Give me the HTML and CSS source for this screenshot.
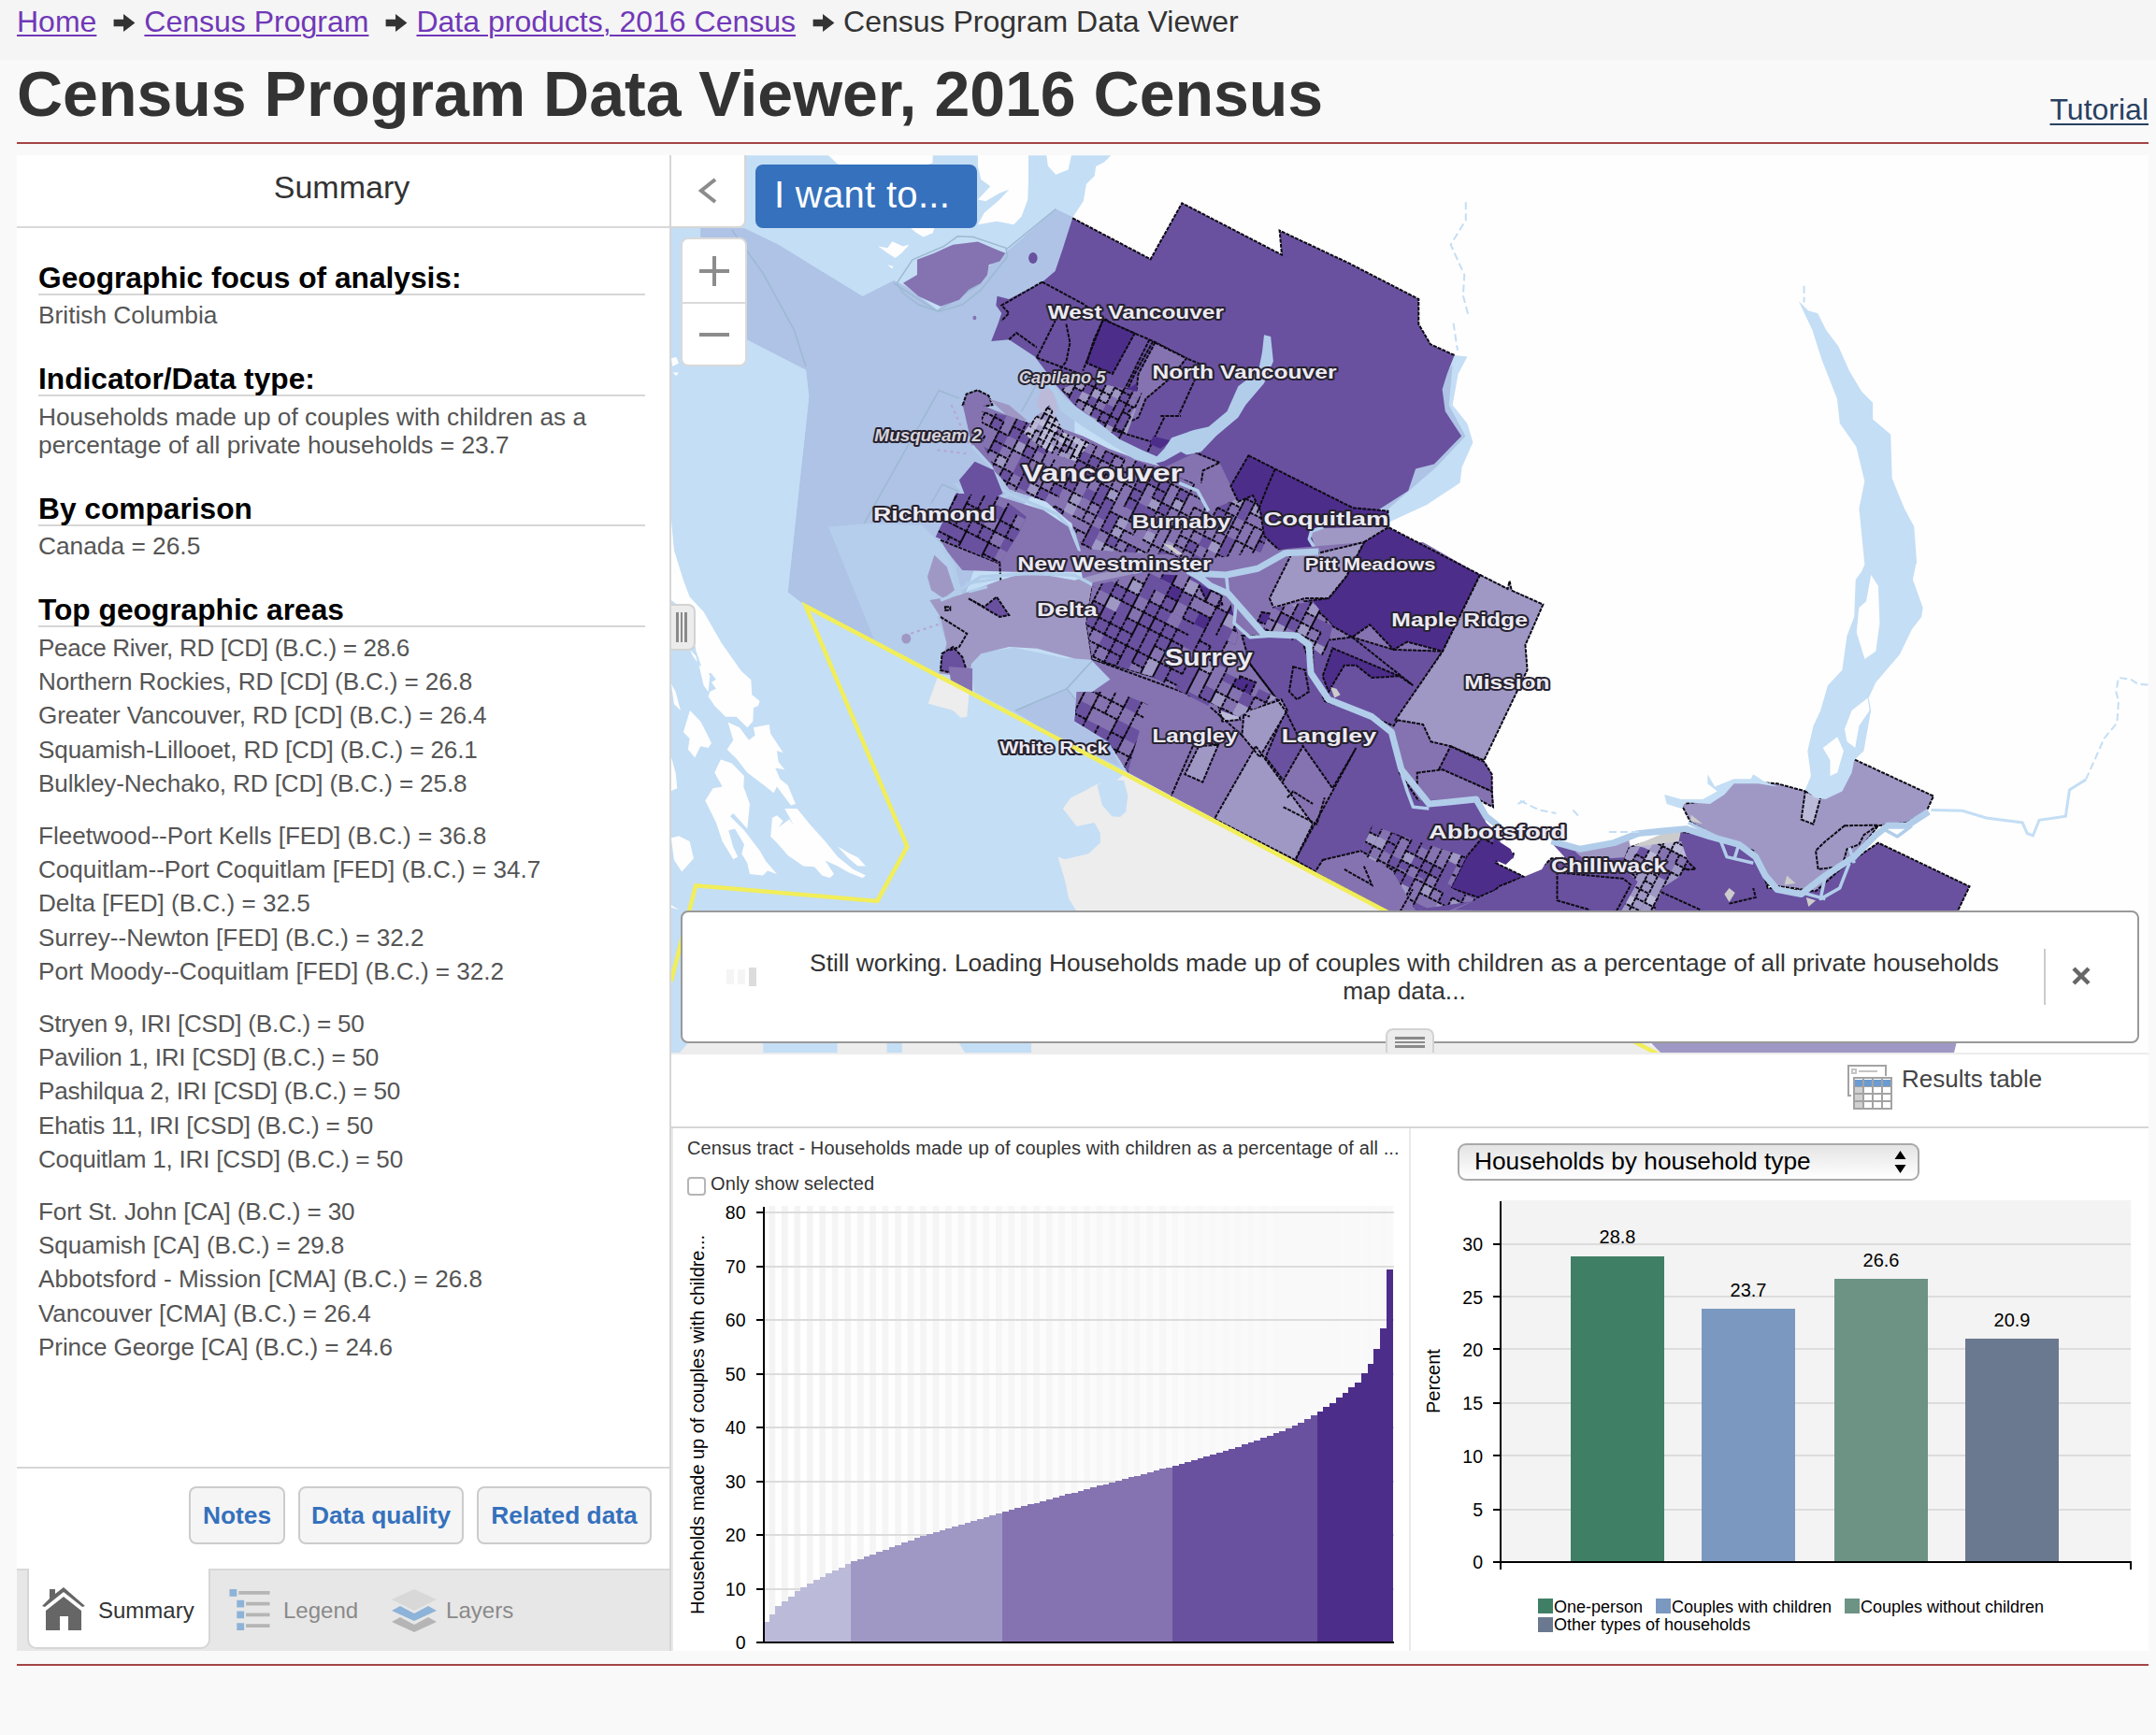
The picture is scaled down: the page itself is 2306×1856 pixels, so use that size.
FILE: index.html
```html
<!DOCTYPE html>
<html lang="en">
<head>
    <meta charset="UTF-8">
    <meta name="viewport" content="width=device-width, initial-scale=1.0">
    <title>Census Program Data Viewer, 2016 Census</title>
    <link rel="stylesheet" href="styles.css">
</head>
<body>
    <nav class="breadcrumb">
        <a href="#">Home</a>
        <svg class="arrow" viewBox="0 0 24 20"><path d="M0 6h11V0l13 10-13 10v-6H0z"/></svg>
        <a href="#">Census Program</a>
        <svg class="arrow" viewBox="0 0 24 20"><path d="M0 6h11V0l13 10-13 10v-6H0z"/></svg>
        <a href="#">Data products, 2016 Census</a>
        <svg class="arrow" viewBox="0 0 24 20"><path d="M0 6h11V0l13 10-13 10v-6H0z"/></svg>
        <span>Census Program Data Viewer</span>
    </nav>
    <header class="page-header">
        <h1>Census Program Data Viewer, 2016 Census</h1>
        <a href="#">Tutorial</a>
    </header>
    <main class="viewer">
        <section class="sidebar">
            <h2>Summary</h2>
            <div class="summary">
                <h3>Geographic focus of analysis:</h3>
                <p>British Columbia</p>
                <h3>Indicator/Data type:</h3>
                <p>Households made up of couples with children as a percentage of all private households = 23.7</p>
                <h3>By comparison</h3>
                <p>Canada = 26.5</p>
                <h3>Top geographic areas</h3>
                <ul class="divisions">
                    <li>Peace River, RD [CD] (B.C.) = 28.6</li>
                    <li>Northern Rockies, RD [CD] (B.C.) = 26.8</li>
                    <li>Greater Vancouver, RD [CD] (B.C.) = 26.4</li>
                    <li>Squamish-Lillooet, RD [CD] (B.C.) = 26.1</li>
                    <li>Bulkley-Nechako, RD [CD] (B.C.) = 25.8</li>
                </ul>
                <ul>
                    <li>Fleetwood--Port Kells [FED] (B.C.) = 36.8</li>
                    <li>Coquitlam--Port Coquitlam [FED] (B.C.) = 34.7</li>
                    <li>Delta [FED] (B.C.) = 32.5</li>
                    <li>Surrey--Newton [FED] (B.C.) = 32.2</li>
                    <li>Port Moody--Coquitlam [FED] (B.C.) = 32.2</li>
                </ul>
                <ul class="subdivisions">
                    <li>Stryen 9, IRI [CSD] (B.C.) = 50</li>
                    <li>Pavilion 1, IRI [CSD] (B.C.) = 50</li>
                    <li>Pashilqua 2, IRI [CSD] (B.C.) = 50</li>
                    <li>Ehatis 11, IRI [CSD] (B.C.) = 50</li>
                    <li>Coquitlam 1, IRI [CSD] (B.C.) = 50</li>
                </ul>
                <ul class="metro">
                    <li>Fort St. John [CA] (B.C.) = 30</li>
                    <li>Squamish [CA] (B.C.) = 29.8</li>
                    <li>Abbotsford - Mission [CMA] (B.C.) = 26.8</li>
                    <li>Vancouver [CMA] (B.C.) = 26.4</li>
                    <li>Prince George [CA] (B.C.) = 24.6</li>
                </ul>
            </div>
            <div class="actions">
                <button class="notes">Notes</button>
                <button class="quality">Data quality</button>
                <button class="related">Related data</button>
            </div>
            <div class="tabs">
                <div class="tab active">
                    <svg class="icon-home" viewBox="0 0 46 46">
                        <path d="M4 46V25L23 10l19 15v21H28V31h-9v15z"/>
                        <path d="M0 20 8 12V2h6v5l9-7 23 20-3 1L23 5 3 21z"/>
                    </svg>
                    <span>Summary</span>
                </div>
                <div class="tab">
                    <svg class="icon-legend" viewBox="0 0 44 46">
                        <path class="blue" d="M0 0h8v8H0zM8 12h8v8H8zM8 24h8v8H8zM8 37h8v8H8z"/>
                        <path class="grey" d="M10 2h34v4H10zM18 14h26v4H18zM18 26h26v4H18zM18 38h26v4H18z"/>
                    </svg>
                    <span>Legend</span>
                </div>
                <div class="tab">
                    <svg class="icon-layers" viewBox="0 0 48 46">
                        <path class="pale" d="M24 0 48 11 24 23 0 11z"/>
                        <path class="blue" d="M0 23 9 18l15 8 15-8 9 5-24 11z"/>
                        <path class="grey" d="M0 35 9 30l15 8 15-8 9 5-24 11z"/>
                    </svg>
                    <span>Layers</span>
                </div>
            </div>
        </section>

        <section class="content">
            <div class="map">
                <svg class="map-canvas" viewBox="488.2 112.9 1074.3 652.8" preserveAspectRatio="none">
                    <defs>
                        <clipPath id="clip-vancouver">
                            <polygon transform="matrix(.26886 0 0 .22665 680 136)" points="125,720 200,735 260,760 330,780 400,810 470,850 560,885 620,915 700,950 740,1040 860,980 900,1120 860,1230 740,1240 640,1180 480,1170 400,1160 370,1080 300,1010 200,970 160,900 130,830"/>
                        </clipPath>
                        <clipPath id="clip-downtown">
                            <polygon transform="matrix(.26886 0 0 .22665 680 136)" points="270,740 310,700 350,790 420,820 380,880 300,850 240,790"/>
                        </clipPath>
                        <clipPath id="clip-north">
                            <polygon transform="matrix(.26886 0 0 .22665 680 136)" points="340,650 400,620 560,660 520,790 500,815 440,755 380,700"/>
                        </clipPath>
                        <clipPath id="clip-richmond">
                            <polygon transform="matrix(.22665 0 0 .24283 486.8 108.8)" points="920,1030 1060,1040 1145,1100 1120,1150 1060,1240 855,1160"/>
                        </clipPath>
                        <clipPath id="clip-surrey">
                            <polygon transform="matrix(.2862 0 0 .22665 680 394.4)" points="400,140 540,100 660,110 750,190 770,300 740,420 870,500 770,560 700,530 550,430 400,375 385,260"/>
                        </clipPath>
                        <clipPath id="clip-whiterock">
                            <polygon transform="matrix(.2862 0 0 .22665 680 394.4)" points="355,575 360,480 460,480 540,520 500,690 490,740 440,640"/>
                        </clipPath>
                        <clipPath id="clip-ridge">
                            <polygon transform="matrix(.2862 0 0 .22665 680 394.4)" points="860,210 960,190 1010,270 990,370 950,330 830,290"/>
                        </clipPath>
                        <clipPath id="clip-abbotsford">
                            <polygon transform="matrix(.2862 0 0 .22665 680 394.4)" points="1110,910 1250,970 1350,1010 1310,1110 1380,1150 1220,1180 1160,1050 1080,1000"/>
                        </clipPath>
                        <clipPath id="clip-chilliwack">
                            <polygon transform="matrix(.34952 0 0 .22665 1019.9 408)" points="470,920 580,900 600,990 540,1050 525,1125 455,1125 490,1030 455,980"/>
                        </clipPath>
                    </defs>

                    <!-- strait, sound and inlets -->
                    <polygon class="water" points="488,113 808,113 803,118 797,121 796,128 790,134 788,146 779,160 760,205 870,320 870,400 830,565 1010,662 1210,766 488,766"/>
                    <g class="land" transform="matrix(.22665 0 0 .24283 486.8 108.8)">
                        <path d="M510 17 H845 V40 L780 60 H560 L530 35Z"/>
                        <path d="M990 17 H1152 V95 L1150 150 1130 200 1105 225 1050 215 990 225 1010 190 1060 150 1090 120 1060 130 1015 155 990 150 1030 110 1000 90 990 50Z"/>
                        <path d="M1210 17 H1290 L1280 60 1240 75 1215 50Z"/>
                        <path d="M670 290 L700 295 715 275 750 290 770 285 745 310 725 325 700 310Z M700 345 L718 350 715 357Z M775 235 H850 L845 250 815 262 790 248Z"/>
                        <path d="M6 1110 L15 1200 45 1290 65 1340 110 1385 165 1475 235 1568 H110 L85 1500 75 1400 6 1350Z"/>
                        <path d="M6 625 L22 622 30 640 10 650Z M10 668 H30 L22 678Z"/>
                    </g>
                    <g class="land" transform="matrix(.22665 0 0 .22665 486.8 435.2)">
                        <path d="M75 20 L100 35 165 140 170 165 215 220 262 262 265 310 290 330 285 345 270 352 268 395 250 415 215 380 180 380 145 345 125 315 130 300 150 290 135 270 150 260 120 225 105 190 80 150 85 60Z"/>
                        <path d="M95 215 L120 225 130 250 125 300 110 280Z M66 165 L85 185 90 205 75 185Z M6 275 L20 300 36 360 15 340Z"/>
                        <path d="M66 360 L100 395 118 430 135 465 125 480 100 475 82 512 60 485 65 450 45 430Z M6 510 L20 560 25 610 6 618Z"/>
                        <path d="M188 398 L225 415 255 455 275 440 270 415 320 405 325 435 365 495 345 490 350 525 370 550 340 545 355 580 380 600 405 660 390 665 345 605 335 625 290 590 250 560 215 515 185 485 205 455Z"/>
                        <path d="M165 518 L200 530 240 570 238 605 258 660 250 740 205 690 195 700 240 745 290 810 310 845 345 885 315 875 300 890 258 885 250 850 232 820 240 790 210 740 190 745 205 800 220 830 205 838 170 780 150 720 115 650 140 610 170 605 145 560Z"/>
                        <path d="M370 675 L410 675 450 725 500 780 540 830 590 870 630 890 620 898 575 880 540 860 500 842 528 885 515 898 490 890 465 862 430 860 380 825 345 785 325 765 330 705 345 697 365 715 350 735 385 710 400 730Z"/>
                        <path d="M540 797 L580 820 605 832 630 860 605 860 575 835Z M30 763 L65 780 78 835 40 878 15 840 6 770Z M6 985 L30 1000 6 992Z"/>
                    </g>
                    <g class="usa" transform="matrix(.22665 0 0 .22665 486.8 435.2)">
                        <path d="M860 255 L962 300 955 380 935 383 910 360 830 338Z"/>
                    </g>
                    <g transform="matrix(.2862 0 0 .22665 680 394.4)">
                        <path class="usa" d="M488 738 L1150 1185 1860 1640 H340 L360 1185 340 1145 330 1085 312 1010 330 1018 390 1000 420 965 420 935 405 900 360 912 325 855 345 820 370 805 410 778 460 765Z"/>
                        <path class="water" d="M412 780 L450 762 480 765 490 815 485 865 470 882 450 880 425 845Z"/>
                    </g>
                    <path class="usa" d="M501 758 H555 V766 H494Z M609 758 H645 V766 H609Z M656 758 H697 L702 766 H656Z M750 758 H1200 V766 H750Z"/>

                    <!-- water covered by coastal tracts -->
                    <g class="marine" transform="matrix(.22665 0 0 .24283 486.8 108.8)">
                        <path d="M100 235 H240 L350 285 620 440 720 392 760 410 860 480 1090 300 1240 178 1300 205 1300 400 1300 900 1000 1200 860 1568 840 1568 660 1480 435 1365 380 1325 448 740 438 660 100 500Z"/>
                        <path class="water" d="M80 500 L250 570 438 660 448 740 380 1325 100 1325Z"/>
                        <path class="marine-light" d="M510 1130 L635 1120 810 1125 870 1180 920 1260 940 1330 860 1400 890 1480 875 1568 850 1568 660 1475Z"/>
                        <path class="hair" d="M200 240 L300 370 400 540 438 650 M625 1120 L865 722 930 745 M720 400 L860 485 1000 400 M840 1060 L875 1003 930 1025 M1240 178 L1080 300 M1130 785 L1180 700"/>
                        <path class="dots" d="M775 1450 L870 1420 M905 765 L960 880 M860 900 L960 912"/>
                        <circle class="c2" cx="760" cy="1465" r="15"/>
                    </g>
                    <g transform="matrix(.2862 0 0 .22665 680 394.4)">
                        <path class="marine-light" d="M100 480 L90 400 115 355 200 338 330 372 400 375 445 440 400 485 360 480 360 580 440 640 490 740Z"/>
                        <path class="marine" d="M200 540 L335 470 360 510 355 580 440 640 470 720 300 625Z"/>
                        <path class="hair" d="M205 540 L335 470 400 380 M335 470 L360 510"/>
                    </g>

                    <!-- North Shore and Tri-Cities -->
                    <g transform="matrix(.26886 0 0 .22665 680 136)">
                        <path class="water" d="M1405 540 L1440 545 1415 600 1400 700 1440 760 1455 820 1425 900 1420 950 1330 1020 1230 1075 1150 1050 1200 800 1340 600Z"/>
                        <path class="marine" d="M1400 570 L1390 700 1435 800 1355 900 1220 1040 1150 1040 1250 800Z"/>
                        <path class="c4" d="M372 100 L583 232 668 52 938 218 932 140 1120 245 1308 360 1308 440 1340 505 1405 540 1385 600 1372 650 1380 720 1424 800 1350 890 1300 905 1280 975 1195 1040 1130 1040 900 1120 700 980 590 880 500 820 400 730 330 640 270 545 200 490 152 495 170 440 180 405 165 380 168 350 200 360 290 305 325 270 345 200Z"/>
                        <path class="edge" d="M372 100 L583 232 668 52 938 218 932 140 1120 245 1308 360 1308 440 1340 505 1405 540 M290 305 L400 375 480 440 590 495 680 550 720 570 M290 305 L180 380 200 405 180 430 M200 490 L220 468 275 515"/>
                        <path class="c5 edge" d="M455 425 L540 470 480 600 410 565 430 490Z"/>
                        <path class="c3 edge" d="M595 500 L680 550 640 610 570 680 550 740 480 780 540 700 550 600Z"/>
                        <path class="edge" d="M275 548 L325 430 M355 440 L365 500 355 560 335 590 M275 548 L460 630 M455 425 L400 590 M580 490 L500 680 M590 495 L540 600 505 690 M710 600 L660 730 M620 740 L575 850 M610 735 H665 M480 780 L620 830"/>
                        <path class="c5" d="M520 650 L545 630 548 675Z M590 800 L640 815 610 840 580 825Z"/>
                        <ellipse class="c4" cx="265" cy="228" rx="12" ry="18"/>
                        <ellipse class="c3" cx="107" cy="420" rx="5" ry="7"/>

                        <path class="c3 edge" d="M75 700 L85 665 115 652 145 670 155 700 110 710Z"/>
                        <path class="c2" d="M145 680 L200 700 250 750 200 740Z"/>
                        <path class="c3" d="M75 700 L115 695 200 735 250 760 300 740 330 770 400 800 470 840 560 880 620 900 700 855 770 885 800 960 860 990 900 1100 1050 1260 400 1260 370 1080 300 1010 200 960 150 900 100 830Z"/>
                        <path class="c1" d="M275 700 L285 655 305 645 325 665 330 720 300 740Z"/>
                    </g>
                    <g class="tracts" clip-path="url(#clip-vancouver)" data-box="690 285 235 140" data-cell="7.5" data-mix="3,3,4,4,3,4,3,2,3,4"></g>
                    <g class="tracts" clip-path="url(#clip-downtown)" data-box="735 290 65 50" data-cell="4.5" data-mix="1,1,2,1"></g>
                    <g class="tracts" clip-path="url(#clip-north)" data-box="760 270 95 65" data-cell="6.5" data-mix="4,4,3,2"></g>
                    <g transform="matrix(.26886 0 0 .22665 680 136)">
                        <path class="c5 edge" d="M848 862 L920 905 1130 1030 1225 1040 1225 1090 1180 1110 1140 1180 1030 1170 930 1165 890 1120 880 1040 860 990 820 1010 800 960Z"/>
                        <path class="c2" d="M1015 1110 L1040 1095 1225 1090 1140 1180 1100 1260 930 1260 960 1180 1030 1165Z"/>
                        <path class="river" d="M1050 1092 L1018 1105 1012 1130 1030 1165"/>
                        <path class="edge" d="M920 905 L900 960 870 1050 M700 850 L770 885 725 910 720 950"/>
                        <path class="inlet" d="M890 475 L908 480 915 560 890 630 840 700 820 740 760 800 720 850 680 860 665 850 620 880 590 890 540 875 480 830 400 770 340 720 320 660 280 600 300 600 350 680 430 745 500 810 560 845 600 865 620 840 640 805 700 780 740 770 790 720 820 640 875 590 885 530Z"/>
                        <path class="river" d="M660 950 L710 975 740 1040"/>
                        <path class="river-line" d="M100 830 L150 895 180 970 210 990"/>
                        <path class="river" d="M55 950 L100 1010 150 1025 200 985 250 1010 330 1050 375 1110 390 1170"/>
                    </g>

                    <!-- Bowen Island, Richmond and Delta -->
                    <g transform="matrix(.22665 0 0 .24283 486.8 108.8)">
                        <path class="hair" d="M730 400 L780 330 880 290 925 260 975 262 1080 295 1085 320 1000 420 940 465 865 485 800 465 750 430Z"/>
                        <path class="c3" d="M750 400 L795 375 795 330 850 310 910 285 990 276 1050 300 1078 310 1060 335 1025 345 1020 375 1000 400 960 420 930 450 870 470 800 440Z"/>
                        <path class="c3" d="M1060 1040 L1200 1080 1280 1130 1310 1200 1370 1240 1300 1265 1100 1265 940 1260 870 1180Z"/>
                        <path class="c4" d="M930 990 L980 935 1040 960 1070 1030 1010 1065 950 1040Z M920 1030 L1060 1040 1145 1100 1120 1150 1060 1240 855 1160Z"/>
                        <path class="edge" d="M870 1170 L1060 1240 1065 1330"/>
                        <path class="c2" d="M850 1215 L890 1250 915 1320 880 1345 840 1320 828 1280Z"/>
                        <path class="c2" d="M835 1350 L930 1335 1060 1290 1150 1265 1300 1290 1380 1270 1560 1240 1400 1420 1400 1532 1300 1525 1180 1495 1090 1490 1000 1510 970 1540 960 1580 865 1570 890 1480 870 1400Z"/>
                        <path class="c4 edge" d="M960 1345 L1010 1370 1050 1340 1090 1395 1060 1400Z M875 1510 L910 1490 940 1520 960 1580 870 1560Z"/>
                        <path class="edge" d="M870 1400 L955 1450 930 1490 900 1500"/>
                        <path class="edge" d="M885 1370 h16 v10 h-16z"/>
                        <path class="river" d="M870 1180 L915 1250 925 1330 870 1350"/>
                        <path class="river" d="M930 1320 L1000 1280 1150 1270 1300 1275 1370 1310 1470 1290 1530 1250"/>
                        <path class="river-line" d="M950 1300 L1060 1285 M960 1325 L1020 1310"/>
                    </g>
                    <g class="tracts" clip-path="url(#clip-richmond)" data-box="675 350 80 65" data-cell="9" data-mix="4,4,4,3"></g>

                    <!-- Surrey, Langley, Maple Ridge, Mission, Abbotsford -->
                    <g transform="matrix(.2862 0 0 .22665 680 394.4)">
                        <path class="c3" d="M400 130 L660 60 900 20 1090 0 1240 0 1385 105 1545 200 1500 330 1505 410 1395 700 1415 745 1420 850 1370 820 1400 900 1470 1185 1150 1185 490 740 445 645 355 575 360 480 400 480 445 440 395 375 385 260Z"/>
                        <path class="c4 edge" d="M400 145 L540 105 700 200 750 310 640 470 550 430 400 375 385 260Z"/>
                        <path class="c3" d="M35 400 L95 405 95 480 40 445Z"/>
                        <path class="c4 edge" d="M780 300 L930 305 950 380 990 510 1110 560 1170 630 1180 740 1240 850 1150 840 1140 920 1085 990 970 1060 915 1020 1070 660 1010 790 935 655 885 765 840 690 890 540 800 390Z"/>
                        <path class="c4 edge" d="M960 320 L1060 305 1165 345 1290 350 1165 590 1000 500 960 420Z"/>
                        <path class="c5 edge" d="M1090 0 L1152 -48 1385 105 1290 350 1200 320 1165 345 1105 265 1060 305 1010 270 990 240 940 190 1000 180 1020 150 1045 110Z"/>
                        <path class="c5 edge" d="M1010 340 L1180 430 1110 435 1070 395 1040 395 1000 480 985 430Z"/>
                        <path class="c2 edge" d="M1385 105 L1455 150 1460 125 1465 155 1545 200 1500 330 1505 410 1395 700 1310 655 1260 640 1240 585 1170 570 1290 350Z"/>
                        <path class="c2 edge" d="M905 40 L975 35 1090 0 1045 110 1000 180 940 180 860 210 850 180Z"/>
                        <path class="c2 edge" d="M785 545 L880 505 895 540 825 690 780 620Z M815 655 L960 905 915 1020 710 888Z M670 655 L720 650 680 770 635 745Z"/>
                        <path class="c4 edge" d="M1310 655 L1395 705 1415 745 1415 800 1280 730Z"/>
                        <path class="c3 edge" d="M1225 740 L1290 730 1415 800 1418 850 1370 820 1250 850 1225 790Z"/>
                        <path class="c5 edge" d="M660 110 L720 160 730 200 700 215Z M595 410 L620 430 605 460 580 435Z M690 415 L705 475 655 440Z M775 430 L815 450 795 505 765 485Z M830 225 L860 230 845 265 820 255Z"/>
                        <path class="c1 edge" d="M640 455 L675 460 670 500 640 490Z M720 525 L770 530 775 570 730 575Z"/>
                        <path class="edge" d="M400 375 L800 560 M700 530 L780 620 M660 640 L600 815 M720 650 L660 640 M800 390 L890 540 935 655 M885 850 L970 905 990 820 M895 820 L910 800 960 840 M1180 430 L1215 460 M1060 305 L1215 460 M910 400 L940 410 950 480 920 505 900 480Z"/>
                        <path class="c4" d="M1150 835 L1370 820 1400 900 1440 945 1390 1140 1300 1185 1220 1185 1240 1080 1085 990 1120 900Z"/>
                        <path class="c3 edge" d="M985 1020 L1085 990 1160 1050 1220 1100 1180 1190 1150 1185 965 1060Z M1040 1050 L1110 1100 1090 1040"/>
                        <path class="c5 edge" d="M1390 950 L1430 975 1470 1000 1465 1025 1430 1012 1425 1030 1500 1075 1380 1140 1310 1110 1350 1010Z"/>
                        <path class="grey-tract" d="M580 5 L600 10 630 40 615 40Z M1005 465 L1020 470 1030 490 1015 500Z"/>
                    </g>
                    <g class="tracts" clip-path="url(#clip-surrey)" data-box="785 410 150 120" data-cell="9" data-mix="4,4,3,4,3,4,4,3,2,5"></g>
                    <g class="tracts" clip-path="url(#clip-whiterock)" data-box="778 500 60 65" data-cell="10" data-mix="4,3,4,3"></g>
                    <g class="tracts" clip-path="url(#clip-ridge)" data-box="910 435 65 50" data-cell="8" data-mix="4,3,2,4"></g>
                    <g class="tracts" clip-path="url(#clip-abbotsford)" data-box="985 595 95 75" data-cell="7.5" data-mix="4,3,3,4,2"></g>
                    <g transform="matrix(.2862 0 0 .22665 680 394.4)">
                        <path class="river wide" d="M975 30 L890 35 820 85 740 105 660 100 700 140 745 165 790 230 835 295 920 300 950 330 955 420 1000 505 1110 560 1160 610 1185 730 1230 800 1255 840 1300 835 1375 825 1400 880 1430 910"/>
                        <path class="river" d="M765 200 L760 260 800 305 860 300 M740 105 L745 165 M1180 720 L1200 800 1215 850 1255 855 M700 140 L640 95"/>
                    </g>

                    <!-- Fraser Valley -->
                    <g transform="matrix(.34952 0 0 .22665 1019.9 408)">
                        <path class="c4 edge" d="M175 1125 L180 1080 200 1045 250 1015 300 970 310 955 400 950 460 925 580 870 640 880 740 940 760 1050 850 1060 900 1000 990 905 1180 1045 1155 1125Z"/>
                        <path class="c4" d="M310 905 L380 935 450 950 400 975 340 955Z M110 1120 L250 1015 260 1125Z"/>
                        <path class="c2" d="M360 935 L470 890 480 950 380 960Z"/>
                        <path class="c2 edge" d="M580 780 L640 770 665 745 690 705 780 715 840 740 905 705 930 630 1105 755 1090 805 1050 840 990 850 940 950 860 1060 760 1040 730 930 660 890 600 840Z"/>
                        <path class="c2 edge" d="M920 850 L990 848 960 880 950 910 925 925 915 980 865 990 860 930 880 900Z"/>
                        <path class="c1 edge" d="M838 740 L870 760 855 845 830 830Z"/>
                        <path class="edge" d="M322 980 V1090 L390 1120 M322 1000 L460 1020 475 1040 445 1125 M520 1050 L620 1120 M680 1100 L735 1080 730 1050 M580 990 L610 990 580 945"/>
                        <path class="grey-tract" d="M480 915 L520 890 550 870 580 865 575 900 530 925Z M600 815 L625 845 600 835Z M680 1050 L692 1065 680 1095 670 1070Z M800 1010 L818 1035 795 1040Z M840 1080 L860 1090 845 1110Z"/>
                        <path class="land" d="M190 955 L230 955 300 965 290 990 255 1013Z"/>
                        <path class="c5" d="M190 890 L225 925 232 950 215 975 185 955Z"/>
                    </g>
                    <g class="tracts" clip-path="url(#clip-chilliwack)" data-box="1178 610 55 55" data-cell="7" data-mix="3,2,1,2"></g>
                    <g transform="matrix(.34952 0 0 .22665 1019.9 408)">
                        <path class="water" d="M965 0 H1070 L1062 60 1083 150 1080 180 1060 220 1035 300 985 390 970 440 975 480 960 610 940 640 935 680 915 740 880 765 858 760 838 735 850 690 843 610 855 530 870 480 885 400 915 350 925 240 940 180 943 60 955 35Z"/>
                        <path class="land" d="M975 45 L990 80 993 200 985 290 962 315 945 230 950 150 965 130Z M968 440 L972 480 950 530 942 600 925 580 920 540 935 480Z M905 565 L918 610 905 680 890 690 890 640 875 600Z"/>
                        <path class="water" d="M545 750 L580 765 625 765 655 740 635 715 635 685 650 725 690 700 725 700 730 685 750 705 780 725 740 715 690 715 670 750 640 780 590 775 580 795 550 780Z"/>
                        <path class="river wide" d="M310 900 L370 925 440 905 490 875 590 860 640 885 700 910 735 950 755 1010 780 1055 830 1070 880 1010 940 950 985 880 1010 850 1050 850 1095 805"/>
                        <path class="river" d="M595 840 L660 890 675 950 730 970 M700 910 L690 960 M880 1010 L870 1085 910 1050 930 970 M820 1060 L880 1085 M930 920 L940 970 M1000 860 L1030 885 1060 850"/>
                        <path class="stream" d="M1100 800 L1165 802 1215 825 1290 840 1300 875 1312 882 1325 832 1380 820 1388 735 1422 702"/>
                        <path class="creek" d="M1422 702 L1440 640 1460 570 1487 520 1490 450 1485 420 1490 375 1515 380 1530 395 1552 398"/>
                        <path class="creek" d="M245 770 L285 800 320 810 M355 800 L370 825 M240 780 L255 770 M430 870 L500 870"/>
                    </g>
                    <path class="water" d="M1308 219 L1315 226 1322 228 1328 240 1337 252 1345 270 1354 285 1362 293 1362 305 1375 316 1376 348 1385 370 1392 383 1394 410 1356 410 1354 390 1352 370 1356 350 1350 325 1338 308 1336 290 1325 262 1318 240Z"/>
                    <path class="creek" d="M1066 147 L1066 160 1055 178 1065 200 1064 215 1068 230 M1057 235 L1060 255 M1312 208 V220"/>
                    <polygon class="c2" points="1208,766 1200,758 1423,758 1421,766"/>

                    <path class="province" d="M488 714 L506 644.2 638 655.5 659.8 615.8 586 441 1010 664 1208 768"/>

                    <g class="labels">
                        <text x="762" y="232" textLength="128" lengthAdjust="spacingAndGlyphs">West Vancouver</text>
                        <text x="838" y="275.5" textLength="134" lengthAdjust="spacingAndGlyphs">North Vancouver</text>
                        <text x="741" y="278.5" textLength="63" lengthAdjust="spacingAndGlyphs" class="small band">Capilano 5</text>
                        <text x="636" y="321" textLength="78" lengthAdjust="spacingAndGlyphs" class="small band">Musqueam 2</text>
                        <text x="743" y="350" textLength="117" lengthAdjust="spacingAndGlyphs" class="big">Vancouver</text>
                        <text x="635" y="379" textLength="89" lengthAdjust="spacingAndGlyphs">Richmond</text>
                        <text x="823" y="384.5" textLength="72" lengthAdjust="spacingAndGlyphs">Burnaby</text>
                        <text x="919" y="382" textLength="91" lengthAdjust="spacingAndGlyphs">Coquitlam</text>
                        <text x="740" y="415" textLength="141" lengthAdjust="spacingAndGlyphs">New Westminster</text>
                        <text x="949" y="414.5" textLength="95" lengthAdjust="spacingAndGlyphs" class="small">Pitt Meadows</text>
                        <text x="754" y="448" textLength="44" lengthAdjust="spacingAndGlyphs">Delta</text>
                        <text x="1012" y="455.5" textLength="99" lengthAdjust="spacingAndGlyphs">Maple Ridge</text>
                        <text x="847" y="484.5" textLength="64" lengthAdjust="spacingAndGlyphs" class="big">Surrey</text>
                        <text x="1065" y="501.5" textLength="62" lengthAdjust="spacingAndGlyphs">Mission</text>
                        <text x="838" y="540" textLength="62" lengthAdjust="spacingAndGlyphs">Langley</text>
                        <text x="932" y="540" textLength="69" lengthAdjust="spacingAndGlyphs">Langley</text>
                        <text x="727" y="548" textLength="79" lengthAdjust="spacingAndGlyphs" class="small">White Rock</text>
                        <text x="1039" y="610" textLength="100" lengthAdjust="spacingAndGlyphs">Abbotsford</text>
                        <text x="1128" y="634.5" textLength="84" lengthAdjust="spacingAndGlyphs">Chilliwack</text>
                    </g>
                    <path class="province" d="M780 543 L808 558"/>
                </svg>

                <button class="collapse"><svg viewBox="0 0 20 28"><path d="M18 2 3 14l15 12"/></svg></button>
                <button class="iwant">I want to...</button>
                <div class="zoom">
                    <button><svg viewBox="0 0 32 32"><path d="M0 16h32M16 0v32"/></svg></button>
                    <button><svg viewBox="0 0 32 32"><path d="M0 16h32"/></svg></button>
                </div>
                <div class="grip grip-left"><i></i><i></i><i></i></div>
                <div class="notice">
                    <div class="loader"><i></i><i></i><i></i></div>
                    <p>Still working. Loading Households made up of couples with children as a percentage of all private households map data...</p>
                    <button class="close"><svg viewBox="0 0 20 20"><path d="M2 2l16 16M18 2 2 18"/></svg></button>
                </div>
                <div class="grip grip-bottom"><i></i><i></i><i></i></div>
            </div>

            <div class="toolbar">
                <svg class="icon-table" viewBox="0 0 48 48">
                    <path class="frame" d="M4 33H1V1h40v11"/>
                    <path class="frame light" d="M5 5h4v4H5zM12 7h20"/>
                    <path fill="#fff" d="M7 14h41v34H7z"/>
                    <path fill="#d0d0d0" d="M7 22h10v26H7z"/>
                    <path class="frame" d="M7 14h40v33H7zM7 23h40M7 31h40M7 39h40M17 15v32M27 15v32M37 15v32"/>
                    <path fill="#6a9bd1" d="M8 16h8v7H8zM18 16h8v7h-8zM28 16h8v7h-8zM38 16h8v7h-8z"/>
                </svg>
                <span>Results table</span>
            </div>

            <div class="charts">
                <div class="chart-panel tracts-panel">
                    <h4>Census tract - Households made up of couples with children as a percentage of all ...</h4>
                    <label><span class="box"></span>Only show selected</label>
                    <svg class="chart" viewBox="720 1283 787 483">
                        <g id="distribution"></g>
                        <text class="axis-title" transform="translate(753 1727) rotate(-90)" textLength="406">Households made up of couples with childre...</text>
                    </svg>
                </div>
                <div class="chart-panel">
                    <div class="select">Households by household type
                        <svg viewBox="0 0 12 24"><path d="M6 0l6 9H0zM6 24l6-9H0z"/></svg>
                    </div>
                    <svg class="chart" viewBox="1509 1263 789 503">
                        <rect x="1605" y="1284" width="674" height="387" fill="#f3f3f3"/>
                        <path class="grid" d="M1605 1331h674M1605 1387h674M1605 1443h674M1605 1501h674M1605 1557h674M1605 1615h674"/>
                        <rect x="1680" y="1344" width="100" height="327" fill="#3f7f66"/>
                        <rect x="1820" y="1400" width="100" height="271" fill="#7b98c0"/>
                        <rect x="1962" y="1368" width="100" height="303" fill="#6d9385"/>
                        <rect x="2102" y="1432" width="100" height="239" fill="#6a7990"/>
                        <path class="axis" d="M1605 1285v394M1597 1671h682v8M1597 1331h8M1597 1387h8M1597 1443h8M1597 1501h8M1597 1557h8M1597 1615h8"/>
                        <g class="values">
                            <text x="1730" y="1330">28.8</text>
                            <text x="1870" y="1387">23.7</text>
                            <text x="2012" y="1355">26.6</text>
                            <text x="2152" y="1419">20.9</text>
                        </g>
                        <g class="ticks">
                            <text x="1586" y="1338">30</text>
                            <text x="1586" y="1395">25</text>
                            <text x="1586" y="1451">20</text>
                            <text x="1586" y="1508">15</text>
                            <text x="1586" y="1565">10</text>
                            <text x="1586" y="1622">5</text>
                            <text x="1586" y="1678">0</text>
                        </g>
                        <text class="axis-title" transform="translate(1540 1512) rotate(-90)">Percent</text>
                        <g class="legend">
                            <rect x="1645" y="1710" width="16" height="16" fill="#3f7f66"/><text x="1662" y="1724.5">One-person</text>
                            <rect x="1771" y="1710" width="16" height="16" fill="#7b98c0"/><text x="1788" y="1724.5">Couples with children</text>
                            <rect x="1973" y="1710" width="16" height="16" fill="#6d9385"/><text x="1990" y="1724.5">Couples without children</text>
                            <rect x="1645" y="1730" width="16" height="16" fill="#6a7990"/><text x="1662" y="1744">Other types of households</text>
                        </g>
                    </svg>
                </div>
            </div>
        </section>
    </main>
    <script src="script.js"></script>
</body>
</html>
```
FILE: styles.css
```css
* {
    box-sizing: border-box;
}
body {
    margin: 0;
    background-color: #f9f9f9;
    font-family: "Liberation Sans", Arial, sans-serif;
    color: #333;
}
h1, h2, h3, h4, p, ul {
    margin: 0;
    padding: 0;
}
button {
    font-family: inherit;
    cursor: pointer;
}

/* Top of page */
.breadcrumb {
    display: flex;
    align-items: flex-start;
    height: 64px;
    padding-left: 18px;
    background-color: #f5f5f5;
    font-size: 32px;
    line-height: 46px;
}
.breadcrumb a {
    color: #7038b8;
    text-underline-offset: 3px;
    text-decoration-thickness: 2px;
}
.arrow {
    width: 24px;
    height: 19px;
    margin: 15px 9px 0 18px;
    fill: #333;
}
.page-header {
    display: flex;
    justify-content: space-between;
    height: 90px;
    margin: 0 8px 0 18px;
    border-bottom: 2px solid #a44444;
}
.page-header h1 {
    font-size: 68px;
    line-height: 73px;
}
.page-header a {
    margin-top: 33px;
    font-size: 32px;
    line-height: 40px;
    color: #284162;
    text-decoration-thickness: 2px;
    text-underline-offset: 4px;
}
.viewer {
    display: flex;
    height: 1616px;
    margin: 12px 8px 0 18px;
    padding-bottom: 14px;
    border-bottom: 2px solid #a44444;
}

/* Summary panel */
.sidebar {
    display: flex;
    flex-direction: column;
    width: 700px;
    background-color: #fff;
    border-right: 2px solid #d6d6d6;
}
.sidebar h2 {
    height: 78px;
    padding-right: 3px;
    border-bottom: 2px solid #d9d9d9;
    font-size: 34px;
    font-weight: normal;
    line-height: 68px;
    text-align: center;
}
.summary {
    flex: 1;
    padding: 34px 26px 0 23px;
    color: #555;
}
.summary h3 {
    border-bottom: 2px solid #d6d6d6;
    font-size: 31.7px;
    line-height: 38px;
    height: 38px;
    color: #000;
}
.summary p {
    margin: 6.2px 0 33.9px;
    font-size: 26.3px;
    line-height: 30.3px;
}
.summary ul {
    margin: 3.2px 0 19.6px;
    list-style: none;
    font-size: 26.1px;
    line-height: 36.3px;
}
.summary ul + ul {
    margin-top: 0;
}
.summary .divisions {
    letter-spacing: -0.13px;
}
.summary .divisions li:first-child {
    letter-spacing: -0.33px;
}
.summary .subdivisions {
    letter-spacing: -0.24px;
}
.summary .metro {
    letter-spacing: -0.1px;
}
.summary .metro li:nth-child(3) {
    letter-spacing: 0.04px;
}
.actions {
    display: flex;
    justify-content: flex-end;
    gap: 14px;
    height: 109px;
    padding: 19px 19px 0 0;
    border-top: 2px solid #d6d6d6;
}
.actions button {
    height: 62px;
    padding: 0;
    background-color: #f5f5f5;
    border: 2px solid #ccc;
    border-radius: 8px;
    color: #3571bd;
    font-size: 26.3px;
    font-weight: bold;
    white-space: nowrap;
}
.actions .notes {
    width: 103px;
}
.actions .quality {
    width: 177px;
}
.actions .related {
    width: 187px;
}
.tabs {
    display: flex;
    height: 88px;
    padding-left: 11px;
    background-color: #e7e7e7;
    border-top: 2px solid #d9d9d9;
}
.tab {
    display: flex;
    align-items: center;
    gap: 14px;
    height: 86px;
    padding-bottom: 1px;
    margin-right: 36px;
    font-size: 24px;
    color: #8a8a8a;
}
.tab span {
    padding-top: 1px;
}
.tab.active {
    width: 196px;
    height: 86px;
    margin: -2px 20px 0 0;
    padding: 2px 0 0 14px;
    background-color: #fff;
    border: 2px solid #d6d6d6;
    border-top: 0;
    border-radius: 0 0 10px 10px;
    color: #333;
}
.tab.active span {
    padding-top: 3px;
}
.icon-home {
    width: 46px;
    height: 46px;
    fill: #666;
}
.icon-legend {
    width: 44px;
    height: 45px;
}
.icon-layers {
    width: 48px;
    height: 46px;
    margin-right: -4px;
}
.blue {
    fill: #8db3d8;
}
.grey {
    fill: #b5b5b5;
}
.pale {
    fill: #d8d8d8;
}

/* Map */
.content {
    display: flex;
    flex-direction: column;
    flex: 1;
    background-color: #fff;
}
.map {
    position: relative;
    height: 960px;
    overflow: hidden;
    background-color: #fefefe;
}
.map-canvas {
    display: block;
    width: 1580px;
    height: 960px;
}
.map-canvas path, .map-canvas polygon {
    vector-effect: non-scaling-stroke;
}
.water {
    fill: #c4def5;
}
.land {
    fill: #fefefe;
}
.usa {
    fill: #ededed;
}
.marine {
    fill: #aec3e5;
}
.marine-light {
    fill: #b4ceec;
}
.inlet {
    fill: #b1cdea;
}
.edge {
    fill: none;
    stroke: #0d0a14;
    stroke-width: 2;
    stroke-dasharray: 4 1.2;
}
.c1 { fill: #bbbad8; }
.c2 { fill: #9f98c5; }
.c3 { fill: #8573b1; }
.c4 { fill: #69519f; }
.c5 { fill: #4d2d8a; }
.grey-tract {
    fill: #ccc;
}
.hair {
    fill: none;
    stroke: #9db9d3;
    stroke-width: 1.5;
}
.dots {
    fill: none;
    stroke: #b5a5d0;
    stroke-width: 2;
    stroke-dasharray: 3 4;
}
.river, .river-line {
    fill: none;
    stroke: #b1cdea;
    stroke-width: 3.5;
    stroke-linejoin: round;
}
.river.wide {
    stroke-width: 7;
}
.river-line {
    stroke-width: 3;
}
.stream {
    fill: none;
    stroke: #c4def5;
    stroke-width: 3;
}
.creek {
    fill: none;
    stroke: #c4def5;
    stroke-width: 2;
    stroke-dasharray: 8 4;
}
.province {
    fill: none;
    stroke: #f1ee5a;
    stroke-width: 4.5;
}
.labels text {
    fill: #eceaf3;
    stroke: #272230;
    stroke-width: 2.6px;
    stroke-linejoin: round;
    paint-order: stroke;
    font-size: 14.2px;
    font-weight: bold;
}
.labels .small {
    font-size: 12px;
}
.labels .big {
    font-size: 17.5px;
}
.labels .band {
    font-style: italic;
    fill: #d5d3dc;
}

/* Map controls */
.collapse, .iwant, .zoom, .grip, .notice {
    position: absolute;
}
.collapse {
    top: 0;
    left: 0;
    width: 80px;
    height: 78px;
    padding: 2px 0 0;
    background-color: #fff;
    border: solid #d6d6d6;
    border-width: 0 2px 2px 0;
    border-radius: 0 0 8px 0;
}
.collapse svg {
    width: 20px;
    height: 28px;
}
.collapse path, .zoom path {
    fill: none;
    stroke: #8c8c8c;
    stroke-width: 4;
}
.iwant {
    top: 10px;
    left: 90px;
    width: 237px;
    height: 68px;
    padding: 0 0 4px 20px;
    background-color: #3571bd;
    border: 0;
    border-radius: 8px;
    color: #fff;
    font-size: 40px;
    letter-spacing: 0.3px;
    text-align: left;
}
.zoom {
    top: 88px;
    left: 10px;
    width: 71px;
    height: 138px;
    background-color: #fff;
    border: 2px solid #d9d9d9;
    border-radius: 8px;
}
.zoom button {
    display: flex;
    align-items: center;
    justify-content: center;
    width: 67px;
    height: 67px;
    background: none;
    border: 0;
}
.zoom button + button {
    border-top: 2px solid #d9d9d9;
}
.zoom svg {
    width: 32px;
    height: 32px;
    flex: none;
}
.grip {
    display: flex;
    align-items: center;
    justify-content: center;
    gap: 2px;
    background-color: #ececec;
    border: 2px solid #d3d3d3;
}
.grip i {
    background-color: #8a8a8a;
}
.grip-left {
    top: 480px;
    left: -2px;
    width: 28px;
    height: 50px;
    border-left: 0;
    border-radius: 0 8px 8px 0;
}
.grip-left i {
    width: 2.5px;
    height: 32px;
}
.grip-bottom {
    flex-direction: column;
    top: 934px;
    left: 764px;
    width: 52px;
    height: 28px;
    border-bottom: 0;
    border-radius: 8px 8px 0 0;
}
.grip-bottom i {
    width: 32px;
    height: 2.5px;
}
.notice {
    top: 808px;
    left: 10px;
    display: flex;
    align-items: center;
    width: 1560px;
    height: 142px;
    background-color: #fff;
    border: 2px solid #999;
    border-radius: 8px;
}
.loader {
    display: flex;
    align-items: center;
    gap: 4px;
    margin: 0 38px 0 47px;
}
.loader i {
    width: 8px;
    height: 16px;
    background-color: #f5f5f5;
}
.loader i:last-child {
    height: 20px;
    background-color: #dcdcdc;
}
.notice p {
    width: 1310px;
    font-size: 26.3px;
    line-height: 30.3px;
    text-align: center;
}
.close {
    width: 78px;
    height: 60px;
    margin-left: auto;
    margin-right: 22px;
    background: none;
    border: 0;
    border-left: 2px solid #ccc;
}
.close svg {
    width: 20px;
    height: 20px;
}
.close path {
    stroke: #666;
    stroke-width: 4.5;
}

/* Results toolbar */
.toolbar {
    display: flex;
    height: 81px;
    padding-left: 1258px;
    border-top: 2px solid #ececec;
    border-bottom: 2px solid #d6d6d6;
    font-size: 26px;
    line-height: 52px;
    color: #444;
}
.icon-table {
    width: 48px;
    height: 48px;
    margin: 11px 10px 0 0;
}
.frame {
    fill: none;
    stroke: #a3a3a3;
    stroke-width: 2;
}
.frame.light {
    stroke: #c4c4c4;
}

/* Charts */
.charts {
    display: flex;
    flex: 1;
}
.chart-panel {
    width: 789px;
}
.tracts-panel {
    width: 791px;
    border: solid #e9e9e9;
    border-width: 0 2px;
}
.chart-panel h4 {
    height: 42px;
    padding-left: 15px;
    font-size: 20px;
    font-weight: normal;
    letter-spacing: 0.12px;
    line-height: 42px;
    white-space: nowrap;
}
.chart-panel label {
    display: flex;
    align-items: center;
    height: 34px;
    padding-left: 15px;
    font-size: 20px;
    letter-spacing: 0.1px;
}
.box {
    width: 20px;
    height: 20px;
    margin: 5px 5px 0 0;
    background-color: #fff;
    border: 2px solid #b5b5b5;
    border-radius: 4px;
}
.chart {
    display: block;
    width: 100%;
    overflow: visible;
}
.chart text {
    fill: #000;
    font-size: 20px;
}
.chart .ticks text {
    text-anchor: end;
    font-size: 19.5px;
}
.chart .values text {
    text-anchor: middle;
}
.chart .legend text {
    font-size: 18px;
}
.grid {
    stroke: #dcdcdc;
    stroke-width: 2;
}
.axis {
    fill: none;
    stroke: #000;
    stroke-width: 2;
}
.select {
    display: flex;
    align-items: center;
    justify-content: space-between;
    width: 494px;
    height: 40px;
    margin: 16px 0 0 50px;
    padding: 0 12px 1px 16px;
    background-image: linear-gradient(#e4e4e4, #fff);
    border: 2px solid #a9a9a9;
    border-radius: 9px;
    font-size: 26.3px;
    color: #000;
}
.select svg {
    width: 13px;
    height: 24px;
}
```
FILE: script.js
```js
const SVG = 'http://www.w3.org/2000/svg';
const COLORS = ['#bbbad8', '#9f98c5', '#8573b1', '#69519f', '#4d2d8a'];

function add(parent, tag, attrs, text) {
    const el = document.createElementNS(SVG, tag);
    for (const key in attrs) el.setAttribute(key, attrs[key]);
    if (text !== undefined) el.textContent = text;
    parent.appendChild(el);
    return el;
}

// Percentile values, [bar index, value]; bars between are interpolated
const points = [
    [0, 3.8], [1, 5.3], [2, 6.7], [3, 7.7], [4, 8.6], [5, 9.5], [6, 10.3], [7, 11], [8, 11.7],
    [10, 12.8], [14, 15.1], [24, 19.4], [38, 24.4], [49, 27.9], [65, 32.9], [75, 36.4], [82, 39.3],
    [85, 40.9], [88, 43], [90, 44.5], [92, 46.5], [94, 48.4], [95, 50.1], [96, 51.8], [97, 54.6],
    [98, 58.5], [99, 69.4]
];

function valueAt(i) {
    const n = points.findIndex(p => p[0] >= i);
    if (points[n][0] === i) return points[n][1];
    const a = points[n - 1], b = points[n];
    return a[1] + (b[1] - a[1]) * (i - a[0]) / (b[0] - a[0]);
}

function drawDistribution() {
    const g = document.getElementById('distribution');
    const left = 817, bottom = 1757, step = 5.75, w = 6.735;
    for (let i = 0; i < 50; i++) {
        const fade = i / 50;
        add(g, 'rect', { x: left + 5.5 + i * 2 * w, y: 1290, width: w, height: 467, fill: '#f4f4f4', opacity: 1 - fade * 0.5 });
        add(g, 'rect', { x: left + 5.5 + i * 2 * w + w, y: 1290, width: i < 49 ? w : 1, height: 467, fill: '#f8f8f8', opacity: fade });
    }
    for (let v = 10; v <= 80; v += 10) {
        const y = Math.round(bottom - v * step);
        add(g, 'path', { class: 'grid', d: `M${left} ${y}H1491` });
        add(g, 'path', { class: 'axis', d: `M809 ${y}h8` });
    }
    for (let i = 0; i < 100; i++) {
        const v = valueAt(i);
        const band = [14, 38, 65, 88, 100].findIndex(n => i < n);
        const x0 = i ? Math.round(left - 1 + i * w) : left;
        const x1 = Math.round(left - 1 + (i + 1) * w);
        add(g, 'rect', { x: x0, y: Math.round(bottom - v * step), width: x1 - x0, height: Math.round(v * step), fill: COLORS[band] });
    }
    add(g, 'path', { class: 'axis', d: `M${left} 1291V${bottom}M809 ${bottom}H1491` });
    const ticks = add(g, 'g', { class: 'ticks' });
    for (let v = 0; v <= 80; v += 10) {
        add(ticks, 'text', { x: 797.5, y: Math.round(bottom - v * step) + 7 }, v);
    }
}

function drawTracts(group, seed) {
    const [x, y, w, h] = group.dataset.box.split(' ').map(Number);
    const size = Number(group.dataset.cell);
    const mix = group.dataset.mix.split(',').map(Number);
    const random = () => {
        seed = (seed * 16807) % 2147483647;
        return seed / 2147483647;
    };
    const at = (u, v) => [x + w / 2 + u * size * 0.9 + v * size * -0.46, y + h / 2 + u * size * 0.46 + v * size * 0.9];
    const n = Math.ceil((w + h) / size / 1.6);
    let lines = '';
    for (let u = -n; u < n; u++) {
        for (let v = -n; v < n; v++) {
            const long = random() < 0.4 ? 2 : 1;
            const a = at(u, v), b = at(u + 1, v), c = at(u + 1, v + long), d = at(u, v + long);
            if (random() < 0.8) {
                add(group, 'polygon', { points: [a, b, c, d].join(' '), class: 'c' + mix[Math.floor(random() * mix.length)] });
            }
            if (random() < 0.6) lines += `M${a}L${b}`;
            if (random() < 0.75) lines += `M${a}L${d}`;
        }
    }
    add(group, 'path', { class: 'edge', d: lines });
}

drawDistribution();
document.querySelectorAll('.tracts').forEach((g, i) => drawTracts(g, 101 + i * 977));
```
